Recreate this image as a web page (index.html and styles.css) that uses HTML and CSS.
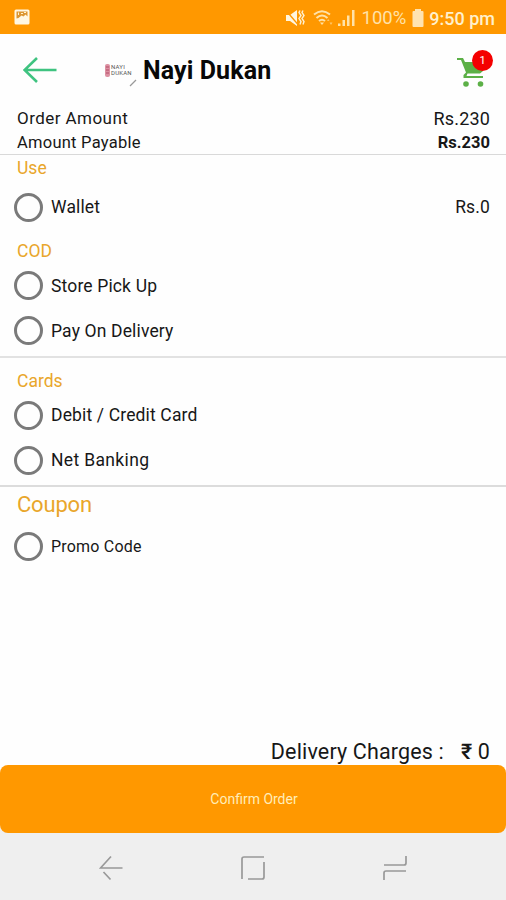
FILE: index.html
```html
<!DOCTYPE html>
<html lang="en">
<head>
<meta charset="utf-8">
<title>Nayi Dukan</title>
<link rel="stylesheet" href="styles.css">
</head>
<body>
<div class="screen">
  <div class="status">
    <svg class="shot" width="16" height="16" viewBox="0 0 16 16"><rect x=".5" y=".5" width="15" height="15" rx="1.500" fill="#fff7e3"/><path d="M2.500 2.500h11v5l-2-2-2 2-2-1-3 2.500-2 .5z" fill="#dc9632"/><path d="M4.500 3.500v2.500M7 4.500h2M10 3.500h2" stroke="#fff2cf"/></svg>
    <div class="indicators">
      <svg width="20" height="18" viewBox="0 0 20 18"><path d="M1 6h4l7-5v16l-7-5H1z" fill="#fff6e0"/><path d="M1 1.500l12 14" stroke="#ff9800" stroke-width="1.300"/><path d="M15 1.500l-1 2 2 3-2 3 2 3-1 3M18 1.500l-1 2 2 3-2 3 2 3-1 3" fill="none" stroke="#fff0cf" stroke-width="1.400"/></svg>
      <svg class="wifi" width="21" height="16" viewBox="0 0 21 16"><g fill="none" stroke="#ffe2a8" stroke-width="2"><path d="M1 4.500q8-6.500 16 0M3.500 8q5.500-5 11 0M6 11q3-2.500 6 0"/></g><path d="M7 12.500h4l-2 2.500z" fill="#ffe2a8"/><path d="M14 11h2.500l-1.250-2zM16.500 12.500h3l-1.500 2.500z" fill="#ffc76a"/></svg>
      <svg class="signal" width="18" height="18" viewBox="0 0 18 18"><path d="M0 14.500h2.500V17H0zM4.500 11H7v6H4.500zM9 6.500h2.500V17H9zM14 1h2.500v16H14z" fill="#ffe2a8"/></svg>
      <span class="percent">100%</span>
      <svg class="battery" width="12" height="18" viewBox="0 0 12 18"><path d="M3 0h6v2h1.500q1 0 1 1v14q0 1-1 1h-9q-1 0-1-1V3q0-1 1-1H3z" fill="#ffe3b0"/></svg>
      <span class="clock">9:50 pm</span>
    </div>
  </div>

  <header class="header">
    <svg class="back" width="34" height="26" viewBox="0 0 34 26"><path d="M33.500 13H1.500M14 1L1.500 13 14 25" fill="none" stroke="#3fc380" stroke-width="2.600"/></svg>
    <div class="logo">
      <svg width="5" height="13" viewBox="0 0 5 13"><rect width="5" height="13" rx="2" fill="#dc91a2"/><path d="M1 3h3M1 6h3M1 9h3" stroke="#b34b66"/></svg>
      <span class="logo-text">NAYI<br>DUKAN</span>
      <svg class="slash" width="8" height="8" viewBox="0 0 8 8"><path d="M1 7l6-6" stroke="#999" stroke-width="1.300"/></svg>
    </div>
    <h1 class="title">Nayi Dukan</h1>
    <div class="cart">
      <svg width="28" height="31" viewBox="0 0 28 31"><path d="M0 1h6l2 4H26v9l-3 2.500H10.500L9.500 19H26v2H6.500v-3L9 15.500 4 3H0z" fill="#5cb047"/><circle cx="9" cy="27" r="2.800" fill="#5cb047"/><circle cx="23.500" cy="27" r="2.800" fill="#5cb047"/></svg>
      <span class="badge">1</span>
    </div>
  </header>

  <section class="amounts">
    <div class="amount"><span class="t-order">Order Amount</span><span class="t-sum">Rs.230</span></div>
    <div class="amount"><span class="t-payable">Amount Payable</span><b class="t-total">Rs.230</b></div>
  </section>

  <section class="group use">
    <h2 class="label">Use</h2>
    <label class="option"><i class="radio"></i><span class="text">Wallet</span><span class="text value">Rs.0</span></label>
  </section>

  <section class="group cod">
    <h2 class="label">COD</h2>
    <label class="option"><i class="radio"></i><span class="text">Store Pick Up</span></label>
    <label class="option"><i class="radio"></i><span class="text">Pay On Delivery</span></label>
  </section>

  <section class="group cards">
    <h2 class="label">Cards</h2>
    <label class="option"><i class="radio"></i><span class="text">Debit / Credit Card</span></label>
    <label class="option"><i class="radio"></i><span class="text net">Net Banking</span></label>
  </section>

  <section class="group coupon">
    <h2 class="label">Coupon</h2>
    <label class="option"><i class="radio"></i><span class="promo">Promo Code</span></label>
  </section>

  <div class="delivery"><span>Delivery Charges :</span><span class="fee"><span class="rupee">₹</span> 0</span></div>
  <div class="footer"><button class="confirm">Confirm Order</button></div>

  <nav class="nav">
    <svg width="24" height="26" viewBox="0 0 24 26"><path d="M23.500 13H1.500L12 1.500M4.500 17l7 7.500" fill="none" stroke="#999" stroke-width="1.700"/></svg>
    <svg width="24" height="26" viewBox="0 0 24 26"><path d="M1 24V4q0-2 2-2h20M23 7v15q0 2-2 2H7" fill="none" stroke="#999" stroke-width="1.700"/></svg>
    <svg width="24" height="26" viewBox="0 0 24 26"><path d="M23 1v7q0 2-2 2H1M1 25v-7q0-2 2-2h20" fill="none" stroke="#999" stroke-width="1.700"/></svg>
  </nav>
</div>
</body>
</html>
```
FILE: styles.css
```css
* { box-sizing: border-box; }
body { margin: 0; background: #fefefe; font-family: Roboto, "Liberation Sans", sans-serif; color: #171717; }
svg { display: block; flex: none; }
.screen { display: flex; flex-direction: column; width: 506px; height: 900px; white-space: nowrap; }

.status { flex: none; height: 34px; padding: 0 11px 0 14px; background: #ff9800; display: flex; align-items: center; justify-content: space-between; }
.indicators { display: flex; align-items: center; padding-top: 2px; }
.wifi { margin-left: 8px; }
.signal { margin-left: 4px; }
.percent { margin-left: 6px; font-size: 18.500px; color: #ffe2a8; }
.battery { margin-left: 6px; }
.clock { margin-left: 5px; font-size: 18px; font-weight: 500; color: #fff0cc; }

.header { flex: none; height: 72px; padding: 0 12px 0 23px; display: flex; align-items: center; }
.logo { display: flex; align-items: center; margin-left: 48px; width: 38px; gap: 1px; }
.logo-text { font-size: 6px; line-height: 6px; color: #555; letter-spacing: .2px; }
.slash { margin: 26px 0 0 -4px; }
.title { margin: 0; padding-top: 2px; font-size: 25px; font-weight: 700; line-height: 30px; letter-spacing: .1px; color: #080808; }
.cart { position: relative; width: 37px; height: 40px; padding-top: 7px; margin-left: auto; }
.badge { position: absolute; top: 0; right: 1px; width: 21px; height: 21px; border-radius: 50%; background: #f40000; color: #fff; font-size: 11px; line-height: 21px; text-align: center; }

.amounts { flex: none; height: 49px; padding: 0 16px 0 17px; border-bottom: 1px solid #d9d9d9; }
.amount { display: flex; align-items: center; justify-content: space-between; height: 24px; }
.t-order { font-size: 17px; letter-spacing: .45px; }
.t-sum { font-size: 18px; letter-spacing: .15px; }
.t-payable { font-size: 16.500px; letter-spacing: .25px; }
.t-total { font-size: 16.500px; font-weight: 700; }

.group { flex: none; padding: 0 16px 0 14px; }
.label { margin: 0 0 0 3px; height: 26px; font-size: 17.500px; line-height: 26px; font-weight: 400; color: #e9a62b; }
.use .label { line-height: 24px; }
.option { display: flex; align-items: center; height: 45px; font-size: 17.500px; letter-spacing: .15px; }
.text { padding-bottom: 1px; }
.cod .text { padding: 1px 0 0; }
.net { letter-spacing: .35px; }
.radio { width: 29px; height: 29px; margin-right: 8px; border: 3px solid #7a7a7a; border-radius: 50%; }
.value { margin-left: auto; }
.use { height: 83px; padding-top: 1px; }
.use .option { margin-top: 3px; }
.cod { height: 120px; border-bottom: 2px solid #e2e2e2; }
.cod .label { margin-bottom: -1px; }
.cards { height: 129px; padding-top: 10px; border-bottom: 2px solid #dcdcdc; }
.cards .label { margin-bottom: -1px; }
.coupon { padding-top: 2px; }
.coupon .label { height: 30px; line-height: 32px; font-size: 22px; letter-spacing: -.2px; }
.coupon .option { margin-top: 5px; }
.promo { font-size: 16px; letter-spacing: .2px; }

.delivery { flex: none; height: 30px; padding: 2px 16px 0 0; margin-top: auto; display: flex; align-items: center; justify-content: flex-end; font-size: 21.500px; letter-spacing: .15px; }
.fee { margin-left: 17px; }
.rupee { font-weight: 500; }
.footer { flex: none; background: linear-gradient(#fefefe 50%, #efefef 50%); }
.confirm { display: block; width: 100%; height: 68px; padding: 0 0 0 2px; border: 0; border-radius: 8px; background: #ff9800; color: #ffedb8; font: 14px Roboto, sans-serif; }
.nav { flex: none; height: 67px; padding: 2px 99px 0 99px; background: #efefef; display: flex; align-items: center; justify-content: space-between; }
```
